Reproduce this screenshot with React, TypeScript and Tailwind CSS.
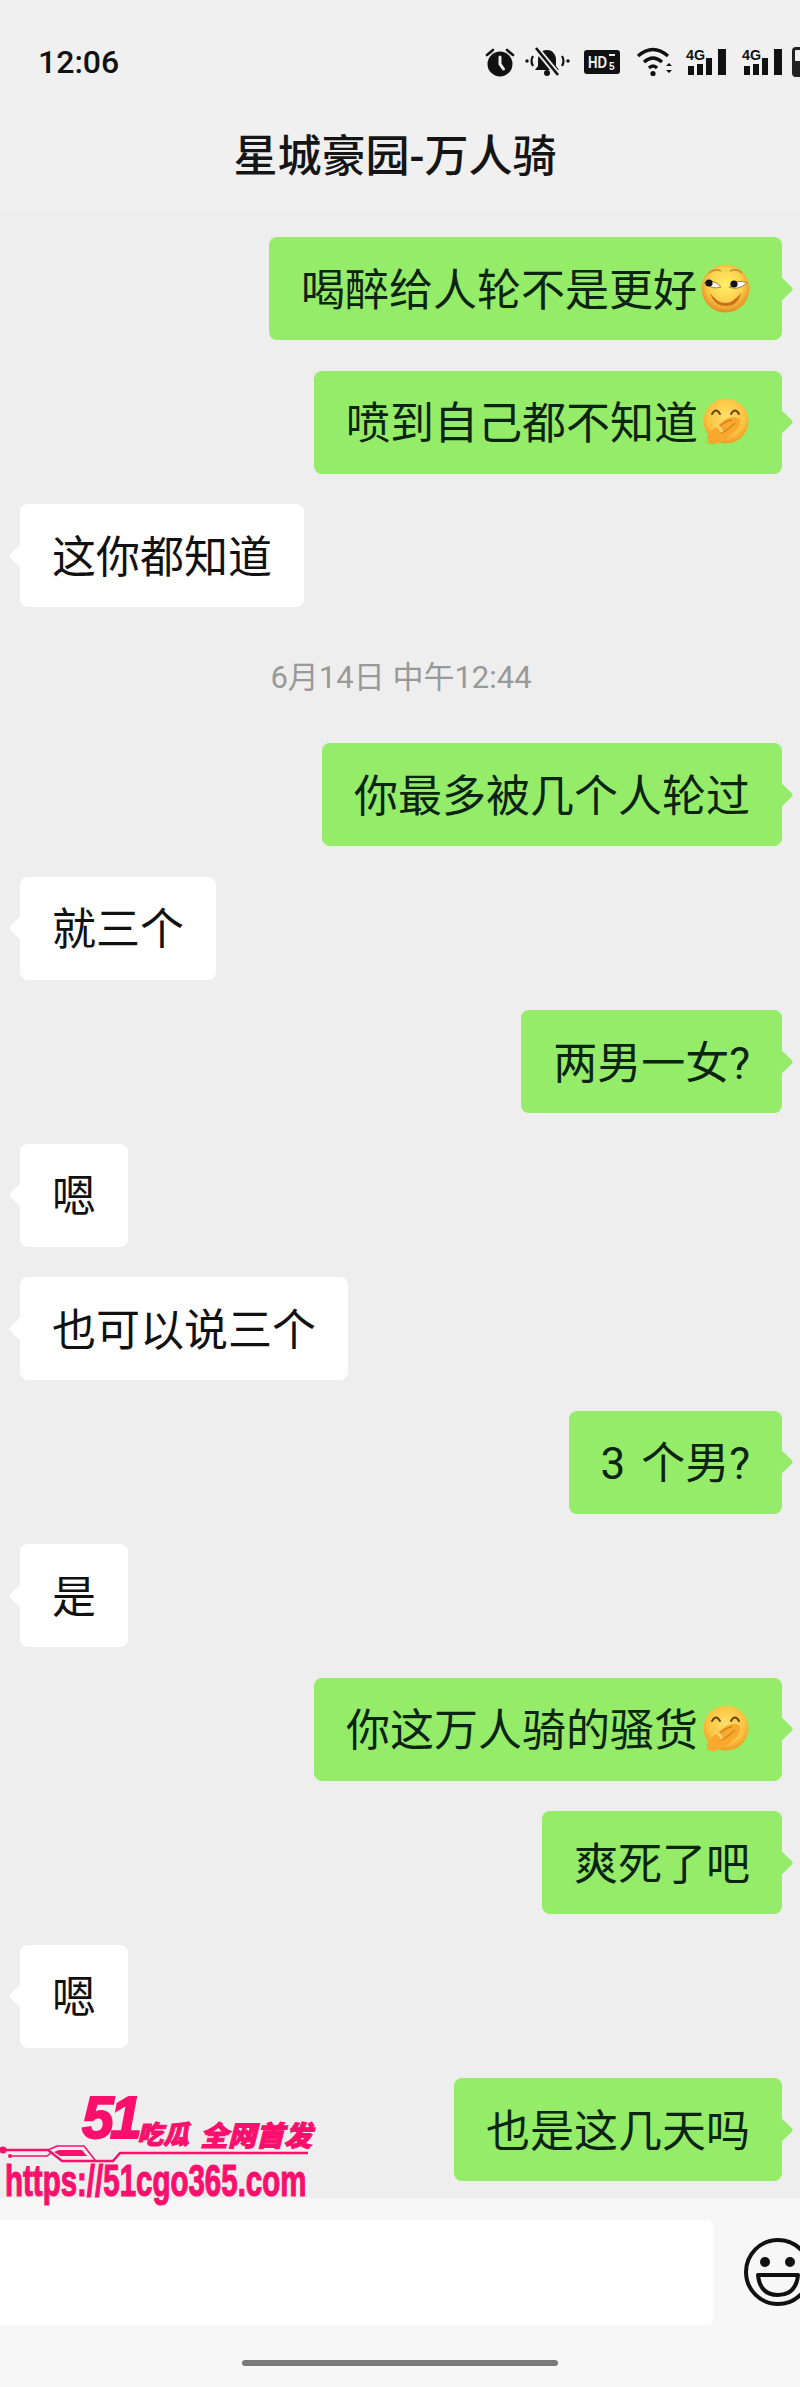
import React from "react";

const cjk = "font-['Roboto','Noto_Sans_CJK_SC',sans-serif]";

function SlyEmoji() {
  return (
    <svg width="49" height="49" viewBox="0 0 49 49" className="ml-[4px] mt-[-4px] shrink-0">
      <defs>
        <radialGradient id="sly" cx="50%" cy="42%" r="58%">
          <stop offset="0%" stopColor="#fff06a" />
          <stop offset="60%" stopColor="#fbd24e" />
          <stop offset="100%" stopColor="#e58a1f" />
        </radialGradient>
      </defs>
      <circle cx="24.5" cy="24.5" r="24" fill="url(#sly)" />
      <path d="M8 9q6-5 12-2M29 7q7-3 12 2" stroke="#c9923a" strokeWidth="1.6" fill="none" />
      <path d="M3 19q9-5 17 4q-9 3-17-4z" fill="#fff" stroke="#b07a28" strokeWidth="1" />
      <path d="M28 23q9-9 18-4q-9 8-18 4z" fill="#fff" stroke="#b07a28" strokeWidth="1" />
      <circle cx="8" cy="19" r="3.6" fill="#111" />
      <circle cx="33" cy="20" r="3.6" fill="#111" />
      <path d="M9 29q15 20 31 0q-3 13-15 13t-16-13z" fill="#c8701c" />
    </svg>
  );
}

function CoverEmoji() {
  return (
    <svg width="48" height="48" viewBox="0 0 48 48" className="ml-[4px] mt-[-4px] shrink-0">
      <defs>
        <radialGradient id="cov" cx="50%" cy="40%" r="60%">
          <stop offset="0%" stopColor="#ffdf6a" />
          <stop offset="70%" stopColor="#fbc340" />
          <stop offset="100%" stopColor="#ee9a25" />
        </radialGradient>
      </defs>
      <circle cx="24" cy="23" r="22.5" fill="url(#cov)" />
      <path d="M10 16q4-7 8 0M29 16q4-7 8 0" stroke="#6d4313" strokeWidth="2" fill="none" strokeLinecap="round" />
      <path d="M5 44q-1-6 4-11q5-4 10-8q6-6 13-6q7 0 6 6q-1 6-7 10q-7 7-15 10q-7 3-11-1z" fill="#f7a92e" />
      <path d="M17 29q6-6 13-7M19 35q7-3 14-10" stroke="#d9851a" strokeWidth="1.4" fill="none" />
      <path d="M12 27q6 1 8 7" stroke="#fbd063" strokeWidth="3" fill="none" />
    </svg>
  );
}

function Bubble({ me, children }: { me?: boolean; children: React.ReactNode }) {
  return (
    <div className={`flex ${me ? "justify-end" : "justify-start"}`}>
      <div
        className={`relative flex h-[103px] items-center whitespace-pre rounded-[8px] px-[32px] text-[44px] leading-none ${
          me ? "bg-[#95ec69] text-[#0c2412]" : "bg-white text-[#111111]"
        }`}
      >
        <span
          className={`absolute top-1/2 size-[17px] -translate-y-1/2 rotate-45 rounded-[2px] ${
            me ? "right-[-8px] bg-[#95ec69]" : "left-[-8px] bg-white"
          }`}
        />
        <span className="relative flex items-center pt-[4px]">{children}</span>
      </div>
    </div>
  );
}

function Signal() {
  return (
    <svg width="41" height="30" viewBox="0 0 41 30" className="shrink-0">
      <text x="0" y="13" fontSize="15" fontWeight="700" fontFamily="Liberation Sans" fill="#111" textLength="19" lengthAdjust="spacingAndGlyphs">4G</text>
      <rect x="2" y="19" width="6" height="9" fill="#111" />
      <rect x="11" y="17" width="6" height="11" fill="#111" />
      <rect x="20" y="11" width="6" height="17" fill="#111" />
      <rect x="32" y="2" width="8" height="26" fill="#111" />
    </svg>
  );
}

function StatusIcons() {
  return (
    <div className="flex items-center text-[#111]">
      <svg width="30" height="30" viewBox="0 0 30 30" className="shrink-0">
        <circle cx="15" cy="17" r="12.5" fill="#111" />
        <path d="M15 10v7l3.5 5" stroke="#eee" strokeWidth="3" fill="none" strokeLinecap="round" />
        <path d="M2 8l6-5M28 8l-6-5" stroke="#111" strokeWidth="2.6" strokeLinecap="round" />
      </svg>
      <svg width="45" height="30" viewBox="0 0 45 30" className="ml-[10px] shrink-0">
        <path d="M22 3c-6 0-9 5-9 10v6l-3 4h24l-3-4v-6c0-5-3-10-9-10z" fill="#111" />
        <circle cx="22" cy="26" r="3" fill="#111" />
        <path d="M11 1l22 27" stroke="#efefef" strokeWidth="6" />
        <path d="M11 1l22 27" stroke="#111" strokeWidth="2.6" />
        <circle cx="2" cy="14" r="1.7" fill="#111" />
        <circle cx="43" cy="14" r="1.7" fill="#111" />
        <path d="M8 9q-3 5 0 10M37 9q3 5 0 10" stroke="#111" strokeWidth="2.2" fill="none" />
      </svg>
      <svg width="36" height="24" viewBox="0 0 36 24" className="ml-[14px] shrink-0">
        <rect width="36" height="24" rx="3" fill="#111" />
        <text x="4" y="18" fontSize="16" fontWeight="700" fontFamily="Liberation Sans" fill="#eee" textLength="19" lengthAdjust="spacingAndGlyphs">HD</text>
        <text x="25" y="20" fontSize="10" fontWeight="700" fontFamily="Liberation Sans" fill="#eee">5</text>
        <rect x="25" y="4" width="6" height="2" fill="#eee" />
      </svg>
      <svg width="38" height="30" viewBox="0 0 38 30" className="ml-[16px] shrink-0">
        <path d="M2 9q15-13 30 0M8 15q9-8 18 0M13 21q4-4 8 0" stroke="#111" strokeWidth="3.4" fill="none" />
        <circle cx="17" cy="26.5" r="2.6" fill="#111" />
        <path d="M30 19l3-3 3 3zM30 23l3 3 3-3z" fill="#111" />
      </svg>
      <div className="ml-[12px] shrink-0"><Signal /></div>
      <div className="ml-[15px] shrink-0"><Signal /></div>
      <div className="ml-[9px] h-[30px] w-[20px] shrink-0 rounded-[4px] border-[3px] border-[#222] bg-[linear-gradient(to_top,#222_55%,transparent_55%)]" />
    </div>
  );
}

function Logo() {
  return (
    <div className="absolute left-0 top-[2080px] h-[130px] w-[330px] text-[#fb0f6c]">
      <svg width="330" height="130" viewBox="0 0 330 130" className="absolute left-0 top-0">
        <circle cx="3" cy="70" r="3.5" fill="#fb0f6c" />
        <path d="M3 70H48L62 81H113L120 73H308" stroke="#fb0f6c" strokeWidth="2.4" fill="none" />
        <path d="M10 76H47L52 72" stroke="#fb0f6c" strokeWidth="1.6" fill="none" />
        <circle cx="10" cy="76" r="2" fill="#fb0f6c" />
        <path d="M48 70L57 66H84L95 80" stroke="#fb0f6c" strokeWidth="1.6" fill="none" />
        <path d="M54 72L59 70H82L87 76H60z" fill="#fb0f6c" />
      </svg>
      <span className="absolute left-[82px] top-[8px] origin-left scale-x-[0.95] font-['Liberation_Sans',sans-serif] text-[60px] font-bold italic leading-none tracking-[-4px] [-webkit-text-stroke:2px_#fb0f6c]">
        51
      </span>
      <span className="absolute left-[137px] top-[40px] font-['Noto_Sans_CJK_SC',sans-serif] text-[26px] font-black italic leading-none [-webkit-text-stroke:1px_#fb0f6c]">
        吃瓜
      </span>
      <span className="absolute left-[200px] top-[40px] font-['Noto_Sans_CJK_SC',sans-serif] text-[28px] font-black italic leading-none [-webkit-text-stroke:1px_#fb0f6c]">
        全网首发
      </span>
      <span className="absolute left-[5px] top-[79px] origin-left scale-x-[0.67] whitespace-pre font-['Liberation_Sans',sans-serif] text-[44px] font-bold leading-none [-webkit-text-stroke:1.2px_#fb0f6c]">
        https://51cgo365.com
      </span>
    </div>
  );
}

export default function App() {
  return (
    <div className={`relative flex h-[2387px] w-[800px] flex-col overflow-hidden bg-[#eeeeee] ${cjk}`}>
      <header className="h-[213px] shrink-0 bg-[#f0f0f0]">
        <div className="flex h-[122px] items-center pl-[38px] pt-[1px]">
          <span className="w-[447px] shrink-0 text-[32px] font-medium leading-none text-[#111]">12:06</span>
          <StatusIcons />
        </div>
        <div className="flex h-[66px] items-center justify-center pr-[10px] pt-[3px] text-[44px] font-medium leading-none text-[#151515]">
          星城豪园-万人骑
        </div>
      </header>

      <main className="flex flex-1 flex-col gap-[30.5px] overflow-hidden pl-[20px] pr-[18px] pt-[24px]">
        <Bubble me>喝醉给人轮不是更好<SlyEmoji /></Bubble>
        <Bubble me>喷到自己都不知道<CoverEmoji /></Bubble>
        <Bubble>这你都知道</Bubble>
        <div className="flex h-[75px] items-center justify-center pt-[4px] text-[31px] leading-none text-[#999999]">
          6月14日 中午12:44
        </div>
        <Bubble me>你最多被几个人轮过</Bubble>
        <Bubble>就三个</Bubble>
        <Bubble me>两男一女?</Bubble>
        <Bubble>嗯</Bubble>
        <Bubble>也可以说三个</Bubble>
        <Bubble me><span className="mr-[5px]">3 </span>个男?</Bubble>
        <Bubble>是</Bubble>
        <Bubble me>你这万人骑的骚货<CoverEmoji /></Bubble>
        <Bubble me>爽死了吧</Bubble>
        <Bubble>嗯</Bubble>
        <Bubble me>也是这几天吗</Bubble>
      </main>

      <footer className="h-[189px] shrink-0 overflow-hidden bg-[#f7f7f7] pt-[22px]">
        <div className="flex">
          <div className="h-[105px] w-[714px] shrink-0 rounded-r-[8px] bg-white" />
          <svg width="70" height="70" viewBox="0 0 70 70" className="ml-[30px] mt-[17px] shrink-0">
            <circle cx="34" cy="35" r="32" fill="none" stroke="#111" strokeWidth="4" />
            <circle cx="21" cy="25" r="5" fill="#111" />
            <circle cx="46" cy="25" r="5" fill="#111" />
            <path d="M14 38H54Q52 58 34 58T14 38z" fill="none" stroke="#111" strokeWidth="4" strokeLinejoin="round" />
          </svg>
        </div>
        <div className="mx-auto mt-[35px] h-[6px] w-[316px] rounded-full bg-[#7a7a7a]" />
      </footer>

      <Logo />
    </div>
  );
}
